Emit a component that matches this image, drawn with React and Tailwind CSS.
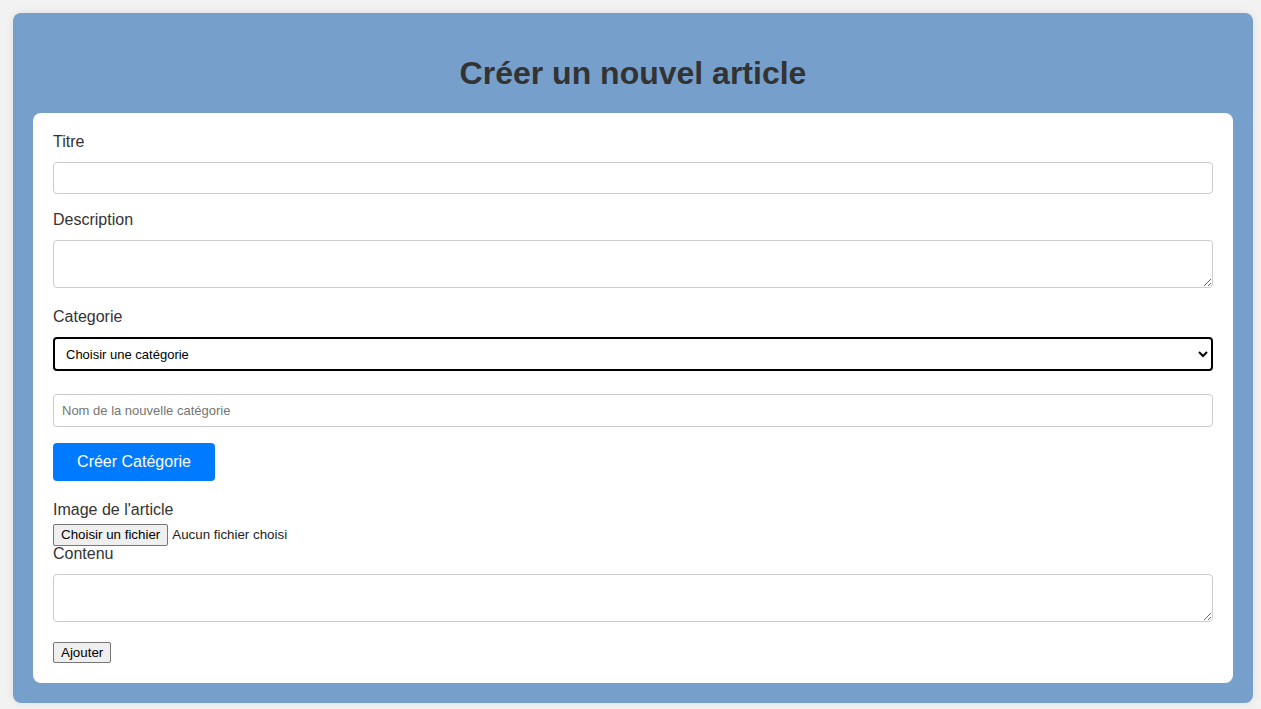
import React from 'react';

function Label({ children, className = '' }) {
  return (
    <label className={`block text-base leading-[18px] text-[#333] ${className}`}>
      {children}
    </label>
  );
}

export default function App() {
  return (
    <div className="min-h-screen bg-[#f2f2f2] p-[13px] font-['Liberation_Sans',Arial,sans-serif]">
      <div className="w-[1240px] bg-[#76a0cb] rounded-lg px-5 pt-5 pb-5 shadow-[0_0_8px_rgba(0,0,0,0.08)]">
        <h1 className="text-center text-[32px] leading-[37px] font-bold text-[#333] mt-[22px] mb-[21px]">
          Créer un nouvel article
        </h1>

        <form className="bg-white rounded-lg p-5" onSubmit={(e) => e.preventDefault()}>
          <Label className="mb-[11px]">Titre</Label>
          <input
            type="text"
            className="block w-full h-[32px] border border-[#ccc] rounded-[4px] px-2 text-[13px] mb-[17px] outline-none"
          />

          <Label className="mb-[11px]">Description</Label>
          <textarea className="block w-full h-[48px] border border-[#ccc] rounded-[4px] px-2 py-1 text-[13px] mb-[20px] outline-none" />

          <Label className="mb-[11px]">Categorie</Label>
          <select className="block w-full h-[34px] border-2 border-black rounded-[4px] pl-[7px] pr-2 text-[13px] text-black bg-white mb-[23px] outline-none">
            <option>Choisir une catégorie</option>
          </select>

          <input
            type="text"
            placeholder="Nom de la nouvelle catégorie"
            className="block w-full h-[33px] border border-[#ccc] rounded-[4px] px-2 text-[13px] placeholder:text-[#757575] mb-[16px] outline-none"
          />

          <button
            type="button"
            className="block h-[38px] w-[162px] bg-[#007bff] text-white text-base rounded-[4px] mb-[20px]"
          >
            Créer Catégorie
          </button>

          <Label>Image de l'article</Label>
          <div className="flex items-start gap-[4px] mt-[5px] h-[21px] text-[13.33px] text-[#222]">
            <span className="h-[22px] leading-[20px] px-[7px] bg-[#efefef] border border-[#767676] rounded-[2px] text-black">
              Choisir un fichier
            </span>
            <span className="leading-[22px]">Aucun fichier choisi</span>
          </div>

          <Label className="mb-[11px]">Contenu</Label>
          <textarea className="block w-full h-[48px] border border-[#ccc] rounded-[4px] px-2 py-1 text-[13px] mb-[20px] outline-none" />

          <button
            type="submit"
            className="block h-[21px] px-[7px] leading-[19px] bg-[#efefef] border border-[#767676] rounded-[2px] text-[13.33px] text-black"
          >
            Ajouter
          </button>
        </form>
      </div>
    </div>
  );
}
